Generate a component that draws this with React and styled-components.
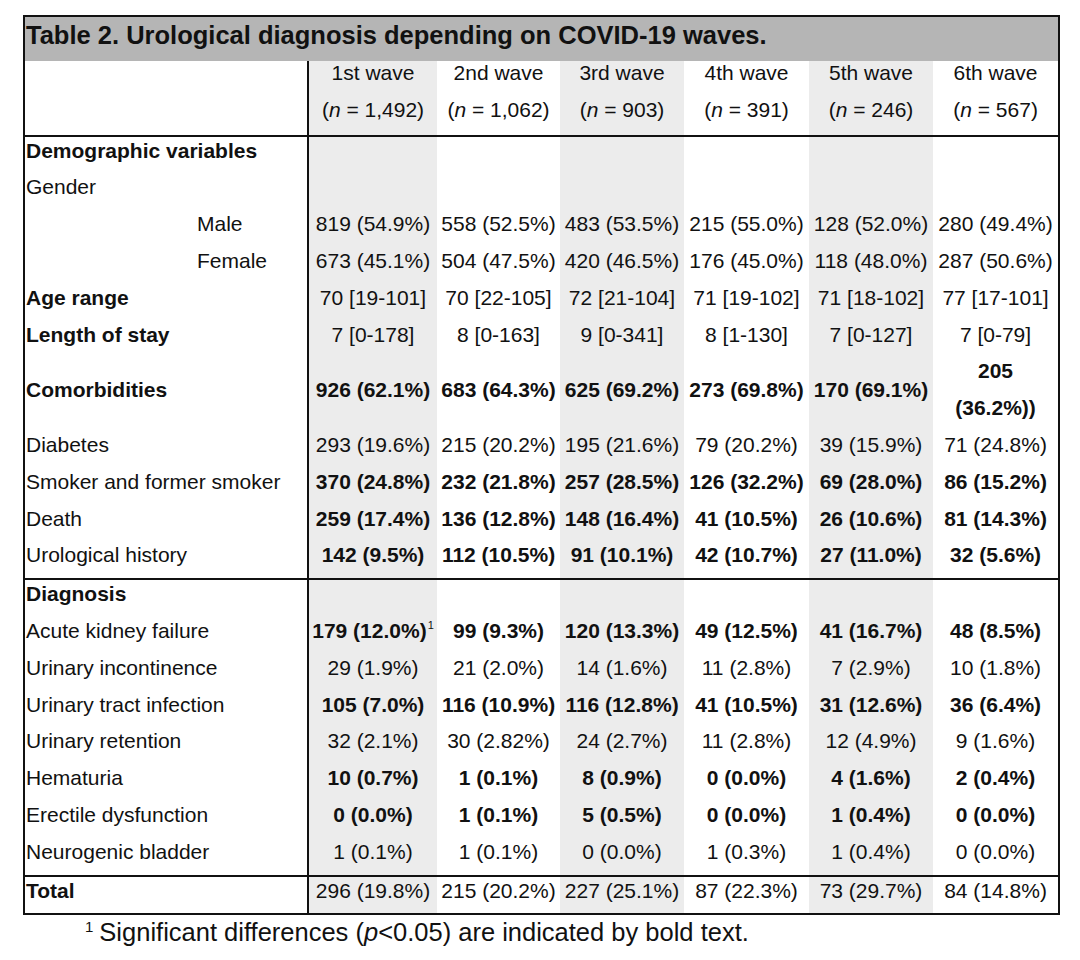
import styled, { createGlobalStyle } from 'styled-components';

const GlobalStyle = createGlobalStyle`
  body {
    margin: 0;
    background: #ffffff;
    font-family: 'Liberation Sans', Arial, sans-serif;
    color: #111111;
  }
`;

const Page = styled.div`
  padding: 15px 0 0 23px;
  width: 1080px;
  height: 960px;
  box-sizing: border-box;
`;

const Table = styled.table`
  width: 1035px;
  table-layout: fixed;
  border-collapse: collapse;
  border: 2px solid #111111;
  font-size: 21px;
`;

const TitleCell = styled.th`
  background: #b5b5b5;
  padding: 0 0 8px 1px;
  line-height: 36px;
  text-align: left;
  font-size: 25.5px;
  font-weight: bold;
  white-space: nowrap;
`;

const HeadCell = styled.th`
  background: ${(p) => (p.$shade ? '#ececec' : '#ffffff')};
  font-weight: normal;
  padding: 0;
  text-align: center;
  vertical-align: top;
  border-bottom: 2px solid #111111;
  border-right: ${(p) => (p.$stub ? '2px solid #111111' : 'none')};
`;

/* one paragraph of cell text: a line plus the space after it */
const Line = styled.div`
  line-height: 27.8px;
  padding-bottom: 9px;
`;

const HeadLine = styled(Line)`
  margin-top: -2px;
  margin-bottom: 2px;
`;

const Row = styled.tr`
  border-top: ${(p) => (p.$rule ? '2px solid #111111' : 'none')};
`;

const Label = styled.td`
  padding: 0 0 0 ${(p) => (p.$indent ? '172px' : '1px')};
  font-weight: ${(p) => (p.$bold ? 'bold' : 'normal')};
  vertical-align: middle;
  white-space: nowrap;
  border-right: 2px solid #111111;
`;

const Cell = styled.td`
  background: ${(p) => (p.$shade ? '#ececec' : '#ffffff')};
  padding: 0;
  text-align: center;
  vertical-align: middle;
  font-weight: ${(p) => (p.$bold ? 'bold' : 'normal')};
  white-space: nowrap;

  sup {
    font-size: 11px;
    font-weight: normal;
    vertical-align: 9px;
    line-height: 0;
    margin-left: 1px;
  }
`;

const Footnote = styled.p`
  margin: 3px 0 0 62px;
  font-size: 25.5px;
  line-height: 28px;

  sup {
    font-size: 15px;
    vertical-align: 9px;
    line-height: 0;
    margin-right: 6px;
  }
`;

const widths = [284, 129, 123, 124, 125, 124, 126];

const waves = [
  ['1st wave', '1,492'],
  ['2nd wave', '1,062'],
  ['3rd wave', '903'],
  ['4th wave', '391'],
  ['5th wave', '246'],
  ['6th wave', '567'],
];

const empty = ['', '', '', '', '', ''];

const rows = [
  { label: 'Demographic variables', labelBold: true, values: empty },
  { label: 'Gender', values: empty },
  { label: 'Male', indent: true, values: ['819 (54.9%)', '558 (52.5%)', '483 (53.5%)', '215 (55.0%)', '128 (52.0%)', '280 (49.4%)'] },
  { label: 'Female', indent: true, values: ['673 (45.1%)', '504 (47.5%)', '420 (46.5%)', '176 (45.0%)', '118 (48.0%)', '287 (50.6%)'] },
  { label: 'Age range', labelBold: true, values: ['70 [19-101]', '70 [22-105]', '72 [21-104]', '71 [19-102]', '71 [18-102]', '77 [17-101]'] },
  { label: 'Length of stay', labelBold: true, values: ['7 [0-178]', '8 [0-163]', '9 [0-341]', '8 [1-130]', '7 [0-127]', '7 [0-79]'] },
  { label: 'Comorbidities', labelBold: true, bold: true, values: ['926 (62.1%)', '683 (64.3%)', '625 (69.2%)', '273 (69.8%)', '170 (69.1%)', ['205', '(36.2%))']] },
  { label: 'Diabetes', values: ['293 (19.6%)', '215 (20.2%)', '195 (21.6%)', '79 (20.2%)', '39 (15.9%)', '71 (24.8%)'] },
  { label: 'Smoker and former smoker', bold: true, values: ['370 (24.8%)', '232 (21.8%)', '257 (28.5%)', '126 (32.2%)', '69 (28.0%)', '86 (15.2%)'] },
  { label: 'Death', bold: true, values: ['259 (17.4%)', '136 (12.8%)', '148 (16.4%)', '41 (10.5%)', '26 (10.6%)', '81 (14.3%)'] },
  { label: 'Urological history', bold: true, values: ['142 (9.5%)', '112 (10.5%)', '91 (10.1%)', '42 (10.7%)', '27 (11.0%)', '32 (5.6%)'] },
  { label: 'Diagnosis', labelBold: true, rule: true, values: empty },
  { label: 'Acute kidney failure', bold: true, note: 0, values: ['179 (12.0%)', '99 (9.3%)', '120 (13.3%)', '49 (12.5%)', '41 (16.7%)', '48 (8.5%)'] },
  { label: 'Urinary incontinence', values: ['29 (1.9%)', '21 (2.0%)', '14 (1.6%)', '11 (2.8%)', '7 (2.9%)', '10 (1.8%)'] },
  { label: 'Urinary tract infection', bold: true, values: ['105 (7.0%)', '116 (10.9%)', '116 (12.8%)', '41 (10.5%)', '31 (12.6%)', '36 (6.4%)'] },
  { label: 'Urinary retention', values: ['32 (2.1%)', '30 (2.82%)', '24 (2.7%)', '11 (2.8%)', '12 (4.9%)', '9 (1.6%)'] },
  { label: 'Hematuria', bold: true, values: ['10 (0.7%)', '1 (0.1%)', '8 (0.9%)', '0 (0.0%)', '4 (1.6%)', '2 (0.4%)'] },
  { label: 'Erectile dysfunction', bold: true, values: ['0 (0.0%)', '1 (0.1%)', '5 (0.5%)', '0 (0.0%)', '1 (0.4%)', '0 (0.0%)'] },
  { label: 'Neurogenic bladder', values: ['1 (0.1%)', '1 (0.1%)', '0 (0.0%)', '1 (0.3%)', '1 (0.4%)', '0 (0.0%)'] },
  { label: 'Total', labelBold: true, rule: true, values: ['296 (19.8%)', '215 (20.2%)', '227 (25.1%)', '87 (22.3%)', '73 (29.7%)', '84 (14.8%)'] },
];

export default function App() {
  return (
    <Page>
      <GlobalStyle />
      <Table>
        <colgroup>
          {widths.map((w, i) => (
            <col key={i} style={{ width: w }} />
          ))}
        </colgroup>
        <thead>
          <tr>
            <TitleCell colSpan={7}>Table 2. Urological diagnosis depending on COVID-19 waves.</TitleCell>
          </tr>
          <tr>
            <HeadCell as="td" $stub />
            {waves.map(([name, n], i) => (
              <HeadCell key={name} $shade={i % 2 === 0}>
                <HeadLine>{name}</HeadLine>
                <HeadLine>
                  (<i>n</i> = {n})
                </HeadLine>
              </HeadCell>
            ))}
          </tr>
        </thead>
        <tbody>
          {rows.map((r) => (
            <Row key={r.label} $rule={r.rule}>
              <Label $bold={r.labelBold} $indent={r.indent}>
                <Line>{r.label}</Line>
              </Label>
              {r.values.map((v, i) => (
                <Cell key={i} $shade={i % 2 === 0} $bold={r.bold}>
                  {Array.isArray(v) ? (
                    v.map((part) => <Line key={part}>{part}</Line>)
                  ) : (
                    <Line>
                      {v || '\u00a0'}
                      {r.note === i && <sup>1</sup>}
                    </Line>
                  )}
                </Cell>
              ))}
            </Row>
          ))}
        </tbody>
      </Table>
      <Footnote>
        <sup>1</sup>Significant differences (<i>p</i>&lt;0.05) are indicated by bold text.
      </Footnote>
    </Page>
  );
}
